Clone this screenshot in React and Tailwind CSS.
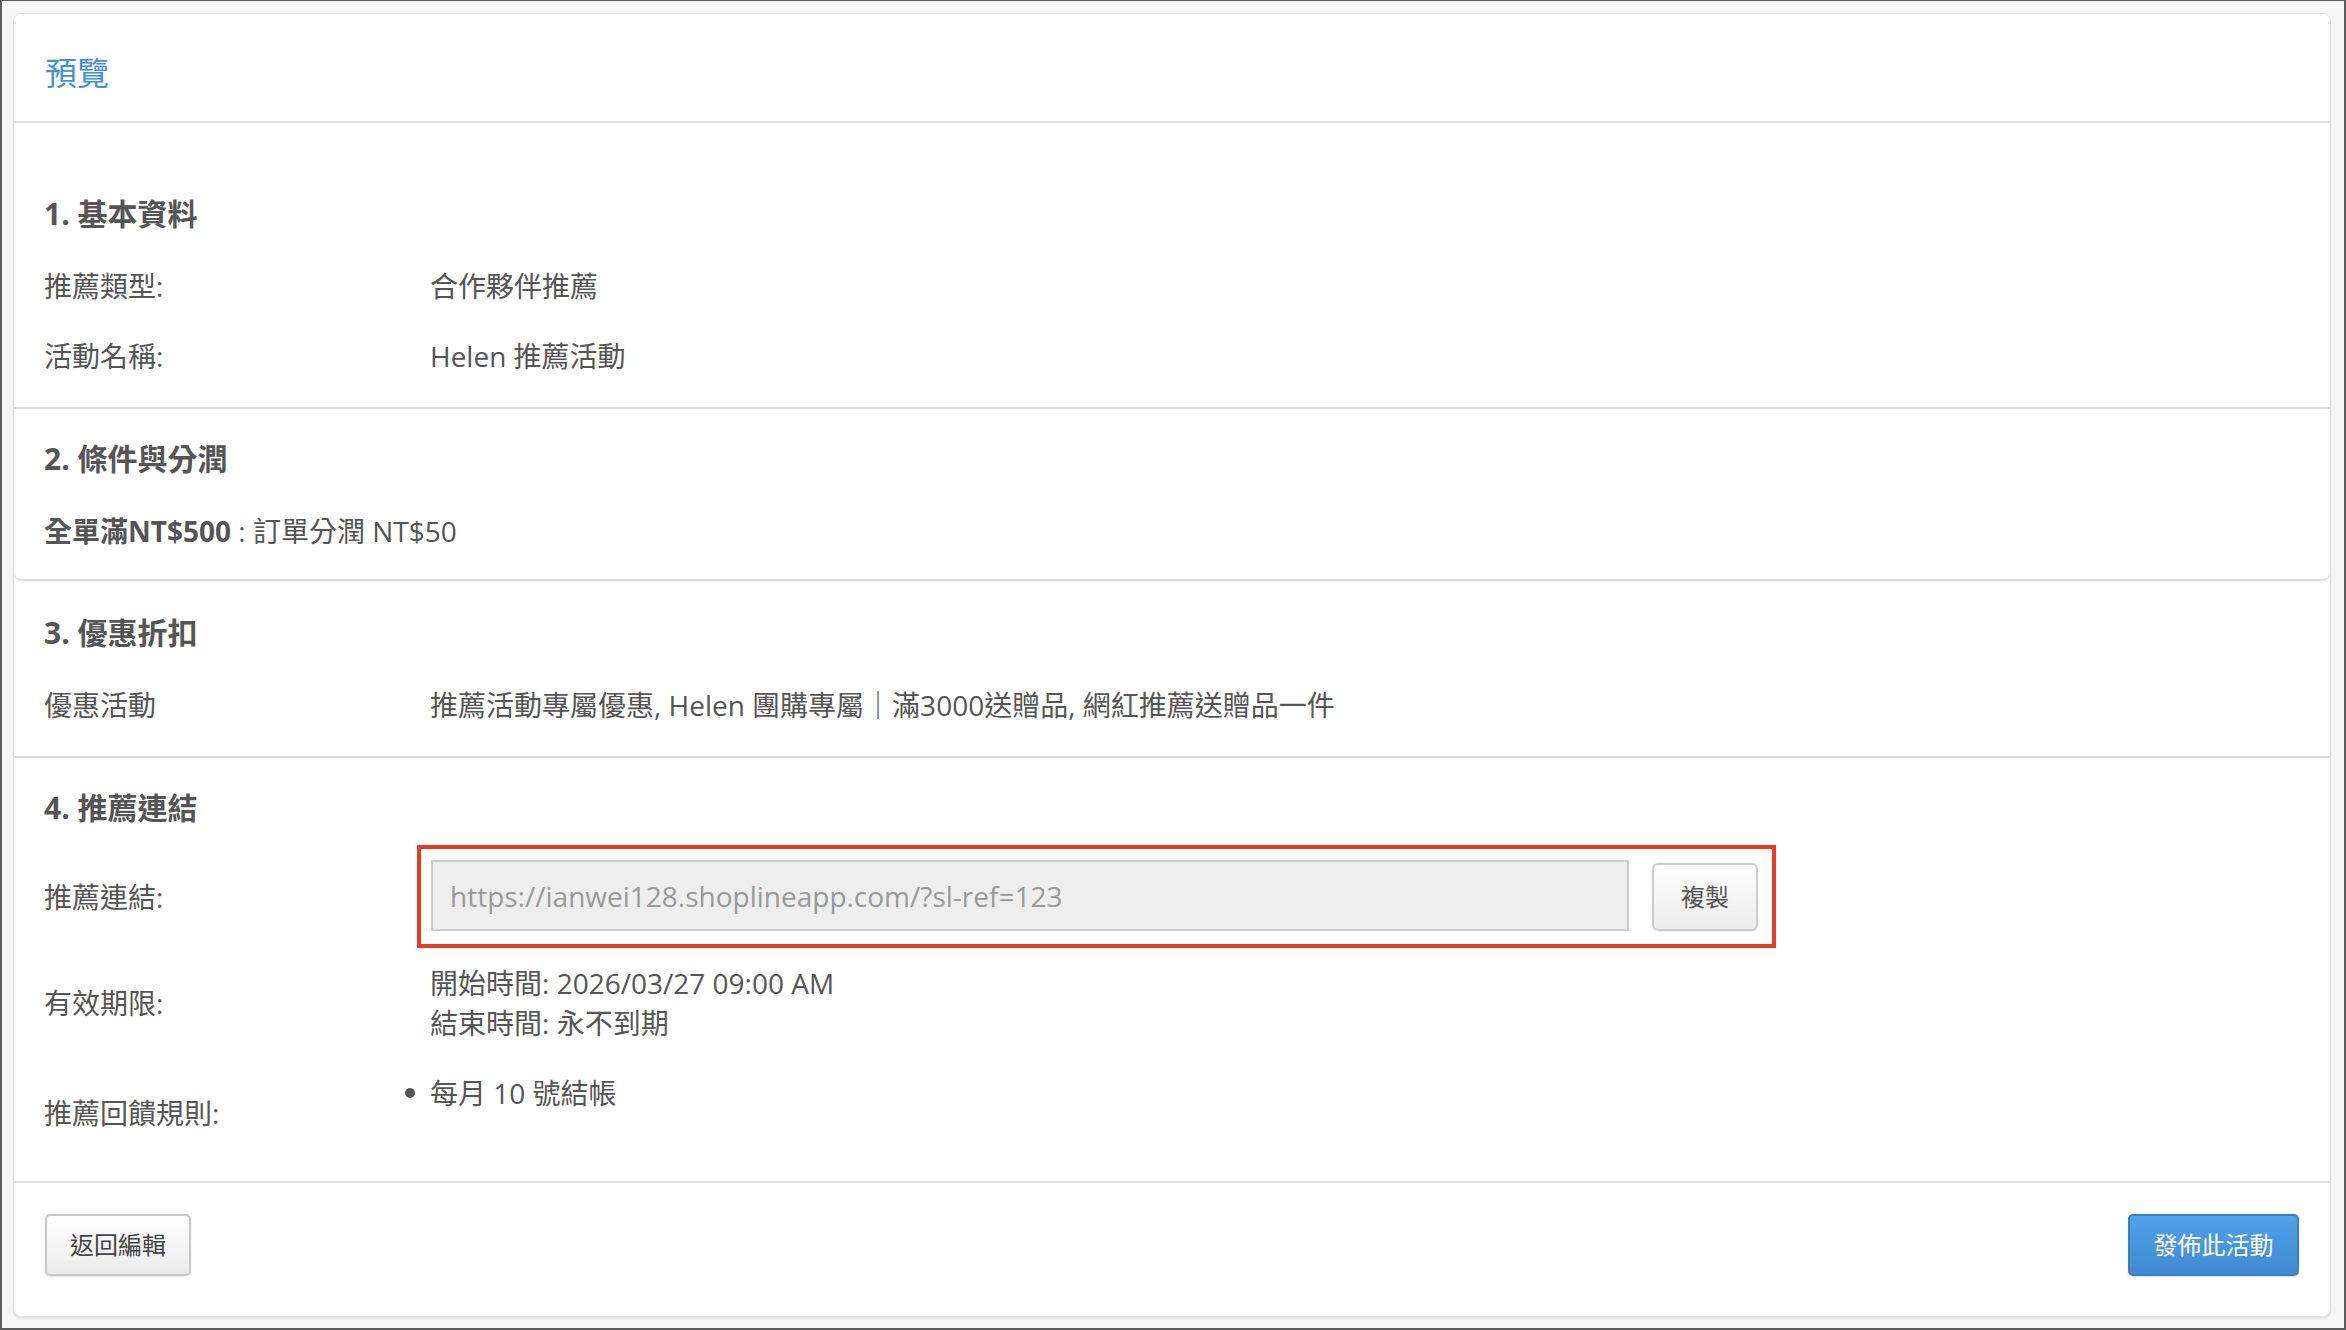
export default function App() {
  const label = "w-[386px] shrink-0";
  return (
    <div className="w-[2346px] h-[1330px] box-border bg-[#f6f6f6] border-l-2 border-r-2 border-t border-b-2 border-[#5c5c5c] pl-[11px] pr-[13px] pt-[12px] font-['Open_Sans','Noto_Sans_CJK_TC',sans-serif] text-[#555] text-[28px]">
      <div className="w-[2318px] h-[1304px] box-border bg-white border border-[#e0e0e0] rounded-[8px] shadow-[0_2px_2px_rgba(0,0,0,0.08)] flex flex-col overflow-hidden">
        {/* top panel */}
        <div className="rounded-b-[8px] border-b-2 border-[#dcdcdc] shadow-[0_1px_2px_rgba(0,0,0,0.05)]">
          <div className="h-[109px] box-border border-b-2 border-[#dedede] pl-[31px] pt-[37px]">
            <div className="h-[44px] leading-[44px] text-[32px] text-[#3f8fdc]">預覽</div>
          </div>
          {/* section 1 */}
          <div className="border-b-2 border-[#dedede] pl-[30px] pt-[69px] pb-[16px]">
            <div className="h-[44px] leading-[44px] text-[30px] font-bold">1. 基本資料</div>
            <div className="mt-[15px]">
              <div className="h-[70px] flex items-center">
                <div className={label}>推薦類型:</div>
                <div>合作夥伴推薦</div>
              </div>
              <div className="h-[70px] flex items-center">
                <div className={label}>活動名稱:</div>
                <div>Helen 推薦活動</div>
              </div>
            </div>
          </div>
          {/* section 2 */}
          <div className="pl-[30px] pt-[28px] pb-[13px]">
            <div className="h-[44px] leading-[44px] text-[30px] font-bold">2. 條件與分潤</div>
            <div className="mt-[15px] h-[70px] flex items-center">
              <span className="font-bold">全單滿NT$500</span>
              <span>&nbsp;: 訂單分潤 NT$50</span>
            </div>
          </div>
        </div>
        {/* section 3 */}
        <div className="border-b-2 border-[#dedede] pl-[30px] pt-[30px] pb-[16px]">
          <div className="h-[44px] leading-[44px] text-[30px] font-bold">3. 優惠折扣</div>
          <div className="mt-[15px] h-[70px] flex items-center">
            <div className={label}>優惠活動</div>
            <div>推薦活動專屬優惠, Helen 團購專屬｜滿3000送贈品, 網紅推薦送贈品一件</div>
          </div>
        </div>
        {/* section 4 */}
        <div className="border-b-2 border-[#dedede] pl-[30px] pt-[28px] pb-[28px]">
          <div className="h-[44px] leading-[44px] text-[30px] font-bold">4. 推薦連結</div>
          <div className="mt-[15px] h-[103px] flex items-center">
            <div className={label}>推薦連結:</div>
            <div className="ml-[-13px] w-[1359px] h-[103px] box-border border-4 border-[#e63e26] flex items-end pl-[10px] pr-[14px] pb-[13px]">
              <div className="w-[1198px] h-[71px] box-border bg-[#eeeeee] border-2 border-[#cccccc] flex items-center pl-[17px] text-[#999]">
                https://ianwei128.shoplineapp.com/?sl-ref=123
              </div>
              <button className="ml-[23px] w-[106px] h-[68px] box-border border-2 border-[#cccccc] rounded-[6px] bg-gradient-to-b from-white to-[#ececec] shadow-[0_1px_2px_rgba(0,0,0,0.08)] text-[24px] text-[#555] flex items-center justify-center">
                複製
              </button>
            </div>
          </div>
          <div className="mt-[15px] h-[80px] flex items-center">
            <div className={label}>有效期限:</div>
            <div className="leading-[40px]">
              <div>開始時間: 2026/03/27 09:00 AM</div>
              <div>結束時間: 永不到期</div>
            </div>
          </div>
          <div className="mt-[30px] flex items-start">
            <div className={label + " h-[80px] flex items-center"}>推薦回饋規則:</div>
            <div className="h-[40px] flex items-center relative">
              <span className="absolute left-[-25px] top-[15px] w-[10px] h-[10px] rounded-full bg-[#555]"></span>
              <span>每月 10 號結帳</span>
            </div>
          </div>
        </div>
        {/* footer */}
        <div className="flex-1 px-[31px] pt-[31px] flex justify-between items-start">
          <button className="w-[146px] h-[62px] box-border border-2 border-[#c8c8c8] rounded-[5px] bg-gradient-to-b from-white to-[#ebebeb] shadow-[0_1px_2px_rgba(0,0,0,0.1)] text-[24px] text-[#444] flex items-center justify-center">
            返回編輯
          </button>
          <button className="w-[171px] h-[62px] box-border border-2 border-[#3b7fc0] rounded-[5px] bg-gradient-to-b from-[#50a3ea] to-[#4189d0] shadow-[0_1px_2px_rgba(0,0,0,0.15)] text-[24px] text-white flex items-center justify-center">
            發佈此活動
          </button>
        </div>
      </div>
    </div>
  );
}
